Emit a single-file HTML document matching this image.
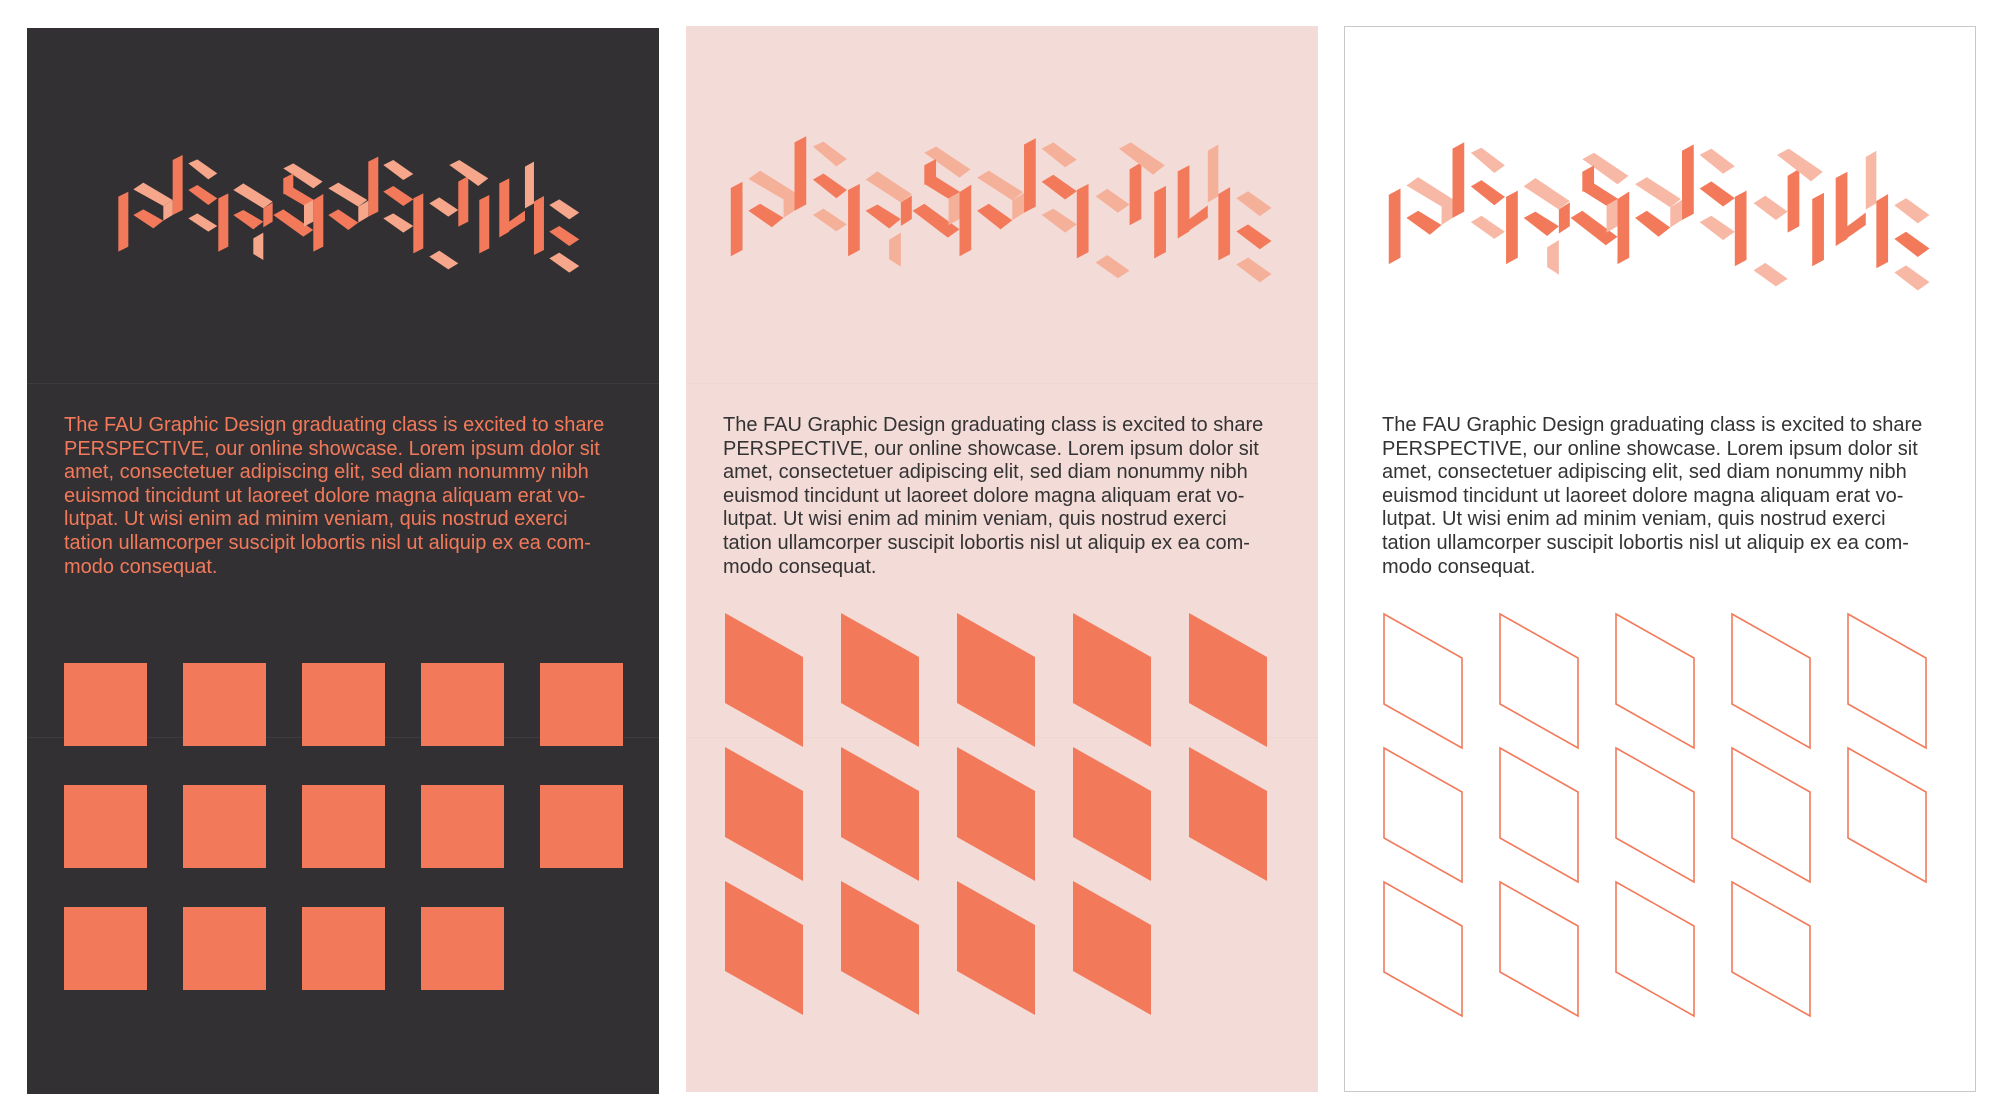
<!DOCTYPE html>
<html><head><meta charset="utf-8"><style>
html,body{margin:0;padding:0;background:#fff;width:2000px;height:1119px;overflow:hidden;position:relative}
.panel{position:absolute;width:632px;height:1066px}
.txt{position:absolute;left:37px;top:386px;font-family:"Liberation Sans",sans-serif;font-size:20px;line-height:23.6px;white-space:nowrap;letter-spacing:0px}
svg{position:absolute;left:0;top:0}
.d{fill:var(--d)} .l{fill:var(--l)}
</style></head><body>
<svg width="0" height="0" style="position:absolute">
<defs>
<g id="logo">
<polygon class="d" points="25,140 55,125 55,290 25,305"/>
<polygon class="l" points="70,118 100,98 188,150 160,168"/>
<polygon class="d" points="188,30 218,15 218,180 188,195"/>
<polygon class="l" points="160,168 188,150 188,195 160,212"/>
<polygon class="d" points="70,195 100,178 160,212 130,235"/>
<polygon class="l" points="235,40 262,28 322,70 295,88"/>
<polygon class="d" points="235,120 262,105 322,145 295,165"/>
<polygon class="l" points="235,205 262,190 322,228 295,245"/>
<polygon class="d" points="325,145 355,130 355,290 325,305"/>
<polygon class="l" points="370,120 400,100 488,155 460,175"/>
<polygon class="d" points="370,195 400,180 460,215 430,238"/>
<polygon class="l" points="430,265 460,248 460,330 430,312"/>
<polygon class="d" points="460,175 488,158 488,215 460,232"/>
<polygon class="d" points="490,195 520,178 610,240 580,260"/>
<polygon class="l" points="520,55 550,40 638,95 610,115"/>
<polygon class="d" points="520,85 550,70 550,118 520,133"/>
<polygon class="d" points="520,130 548,112 612,150 585,168"/>
<polygon class="l" points="582,165 610,150 610,215 582,230"/>
<polygon class="d" points="610,150 640,132 640,290 610,305"/>
<polygon class="l" points="655,115 685,98 772,150 745,170"/>
<polygon class="d" points="775,35 805,20 805,185 775,200"/>
<polygon class="l" points="745,170 775,152 775,200 745,218"/>
<polygon class="d" points="655,195 685,178 745,218 715,240"/>
<polygon class="l" points="820,45 850,30 910,72 880,90"/>
<polygon class="d" points="820,125 850,108 910,148 880,168"/>
<polygon class="l" points="820,205 850,190 910,228 880,248"/>
<polygon class="d" points="910,145 940,130 940,295 910,310"/>
<polygon class="l" points="958,160 988,142 1045,180 1015,200"/>
<polygon class="l" points="958,320 988,302 1045,340 1015,358"/>
<polygon class="d" points="1045,95 1075,78 1075,215 1045,230"/>
<polygon class="l" points="1018,45 1048,30 1135,85 1105,108"/>
<polygon class="d" points="1108,150 1138,135 1138,295 1108,310"/>
<polygon class="d" points="1168,100 1198,85 1198,245 1168,262"/>
<polygon class="d" points="1198,215 1245,182 1245,212 1168,262"/>
<polygon class="l" points="1245,50 1272,35 1272,160 1245,175"/>
<polygon class="d" points="1272,155 1302,138 1302,300 1272,315"/>
<polygon class="l" points="1318,165 1348,148 1408,188 1378,208"/>
<polygon class="d" points="1318,245 1348,228 1408,268 1378,288"/>
<polygon class="l" points="1318,325 1348,308 1408,348 1378,368"/>
</g>
</defs>
</svg>

<!-- dark panel -->
<div class="panel" style="left:27px;top:28px;background:#323033">
<div style="position:absolute;left:0;right:0;top:355px;height:1px;background:#3d3b3e"></div>
<div style="position:absolute;left:0;right:0;top:709px;height:1px;background:#3d3b3e"></div>
<svg width="632" height="1066">
<g transform="translate(83,122) scale(0.3333)"><use href="#logo" style="--d:#f27a5a;--l:#f6a68a"/></g>
<g fill="#f27a5a">
<rect x="37" y="635" width="83" height="83"/><rect x="156" y="635" width="83" height="83"/><rect x="275" y="635" width="83" height="83"/><rect x="394" y="635" width="83" height="83"/><rect x="513" y="635" width="83" height="83"/>
<rect x="37" y="757" width="83" height="83"/><rect x="156" y="757" width="83" height="83"/><rect x="275" y="757" width="83" height="83"/><rect x="394" y="757" width="83" height="83"/><rect x="513" y="757" width="83" height="83"/>
<rect x="37" y="879" width="83" height="83"/><rect x="156" y="879" width="83" height="83"/><rect x="275" y="879" width="83" height="83"/><rect x="394" y="879" width="83" height="83"/>
</g>
</svg>
<div class="txt" style="color:#f27a5a">The FAU Graphic Design graduating class is excited to share<br>PERSPECTIVE, our online showcase. Lorem ipsum dolor sit<br>amet, consectetuer adipiscing elit, sed diam nonummy nibh<br>euismod tincidunt ut laoreet dolore magna aliquam erat vo-<br>lutpat. Ut wisi enim ad minim veniam, quis nostrud exerci<br>tation ullamcorper suscipit lobortis nisl ut aliquip ex ea com-<br>modo consequat.</div>
</div>

<!-- pink panel -->
<div class="panel" style="left:686px;top:26px;background:#f3dbd7">
<div style="position:absolute;left:0;right:0;top:357px;height:1px;background:#f0d6d1"></div>
<div style="position:absolute;left:0;right:0;top:711px;height:1px;background:#f0d6d1"></div>
<svg width="632" height="1066">
<g transform="translate(35,104) scale(0.391,0.414)"><use href="#logo" style="--d:#f27a5a;--l:#f5b09a"/></g>
<g fill="#f27a5a">
<polygon points="39,587 117,631 117,721 39,677"/>
<polygon points="155,587 233,631 233,721 155,677"/>
<polygon points="271,587 349,631 349,721 271,677"/>
<polygon points="387,587 465,631 465,721 387,677"/>
<polygon points="503,587 581,631 581,721 503,677"/>
<polygon points="39,721 117,765 117,855 39,811"/>
<polygon points="155,721 233,765 233,855 155,811"/>
<polygon points="271,721 349,765 349,855 271,811"/>
<polygon points="387,721 465,765 465,855 387,811"/>
<polygon points="503,721 581,765 581,855 503,811"/>
<polygon points="39,855 117,899 117,989 39,945"/>
<polygon points="155,855 233,899 233,989 155,945"/>
<polygon points="271,855 349,899 349,989 271,945"/>
<polygon points="387,855 465,899 465,989 387,945"/>
</g>
</svg>
<div class="txt" style="color:#333;top:388px">The FAU Graphic Design graduating class is excited to share<br>PERSPECTIVE, our online showcase. Lorem ipsum dolor sit<br>amet, consectetuer adipiscing elit, sed diam nonummy nibh<br>euismod tincidunt ut laoreet dolore magna aliquam erat vo-<br>lutpat. Ut wisi enim ad minim veniam, quis nostrud exerci<br>tation ullamcorper suscipit lobortis nisl ut aliquip ex ea com-<br>modo consequat.</div>
</div>

<!-- white panel -->
<div class="panel" style="left:1344px;top:26px;width:630px;height:1064px;border:1px solid #c8c8c8;background:#fff">
<svg width="632" height="1066">
<g transform="translate(34,109) scale(0.391,0.42)"><use href="#logo" style="--d:#f27a5a;--l:#f7b8a6"/></g>
<g fill="none" stroke="#f27a5a" stroke-width="1.6">
<polygon points="39,587 117,631 117,721 39,677"/>
<polygon points="155,587 233,631 233,721 155,677"/>
<polygon points="271,587 349,631 349,721 271,677"/>
<polygon points="387,587 465,631 465,721 387,677"/>
<polygon points="503,587 581,631 581,721 503,677"/>
<polygon points="39,721 117,765 117,855 39,811"/>
<polygon points="155,721 233,765 233,855 155,811"/>
<polygon points="271,721 349,765 349,855 271,811"/>
<polygon points="387,721 465,765 465,855 387,811"/>
<polygon points="503,721 581,765 581,855 503,811"/>
<polygon points="39,855 117,899 117,989 39,945"/>
<polygon points="155,855 233,899 233,989 155,945"/>
<polygon points="271,855 349,899 349,989 271,945"/>
<polygon points="387,855 465,899 465,989 387,945"/>
</g>
</svg>
<div class="txt" style="color:#333;top:387px">The FAU Graphic Design graduating class is excited to share<br>PERSPECTIVE, our online showcase. Lorem ipsum dolor sit<br>amet, consectetuer adipiscing elit, sed diam nonummy nibh<br>euismod tincidunt ut laoreet dolore magna aliquam erat vo-<br>lutpat. Ut wisi enim ad minim veniam, quis nostrud exerci<br>tation ullamcorper suscipit lobortis nisl ut aliquip ex ea com-<br>modo consequat.</div>
</div>
</body></html>
